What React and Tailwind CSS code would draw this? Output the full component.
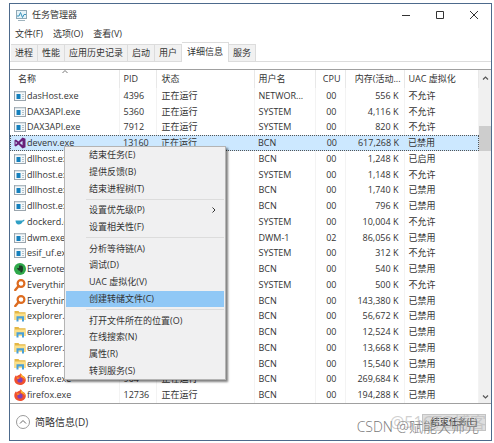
import { useState } from "react";

const processes = [
  { icon: "app", name: "dasHost.exe", pid: "4396", user: "NETWOR...", cpu: "00", mem: "556 K", uac: "不允许" },
  { icon: "app", name: "DAX3API.exe", pid: "5360", user: "SYSTEM", cpu: "00", mem: "4,116 K", uac: "不允许" },
  { icon: "app", name: "DAX3API.exe", pid: "7912", user: "SYSTEM", cpu: "00", mem: "820 K", uac: "不允许" },
  { icon: "vs", name: "devenv.exe", pid: "13160", user: "BCN", cpu: "00", mem: "617,268 K", uac: "已禁用" },
  { icon: "app", name: "dllhost.exe", pid: "", user: "BCN", cpu: "00", mem: "1,248 K", uac: "已启用" },
  { icon: "app", name: "dllhost.exe", pid: "", user: "SYSTEM", cpu: "00", mem: "1,148 K", uac: "不允许" },
  { icon: "app", name: "dllhost.exe", pid: "", user: "BCN", cpu: "00", mem: "1,740 K", uac: "已禁用" },
  { icon: "app", name: "dllhost.exe", pid: "", user: "BCN", cpu: "00", mem: "796 K", uac: "已禁用" },
  { icon: "docker", name: "dockerd.exe", pid: "", user: "SYSTEM", cpu: "00", mem: "10,004 K", uac: "不允许" },
  { icon: "app", name: "dwm.exe", pid: "", user: "DWM-1", cpu: "02", mem: "86,056 K", uac: "已禁用" },
  { icon: "app", name: "esif_uf.exe", pid: "", user: "SYSTEM", cpu: "00", mem: "312 K", uac: "不允许" },
  { icon: "evernote", name: "Evernote.exe", pid: "", user: "BCN", cpu: "00", mem: "540 K", uac: "已禁用" },
  { icon: "search", name: "Everything.exe", pid: "", user: "SYSTEM", cpu: "00", mem: "500 K", uac: "不允许" },
  { icon: "search", name: "Everything.exe", pid: "", user: "BCN", cpu: "00", mem: "143,380 K", uac: "已禁用" },
  { icon: "folder", name: "explorer.exe", pid: "", user: "BCN", cpu: "00", mem: "56,672 K", uac: "已禁用" },
  { icon: "folder", name: "explorer.exe", pid: "", user: "BCN", cpu: "00", mem: "12,524 K", uac: "已禁用" },
  { icon: "folder", name: "explorer.exe", pid: "", user: "BCN", cpu: "00", mem: "13,668 K", uac: "已禁用" },
  { icon: "folder", name: "explorer.exe", pid: "", user: "BCN", cpu: "00", mem: "15,540 K", uac: "已禁用" },
  { icon: "firefox", name: "firefox.exe", pid: "904", user: "BCN", cpu: "00", mem: "269,684 K", uac: "已禁用" },
  { icon: "firefox", name: "firefox.exe", pid: "12736", user: "BCN", cpu: "00", mem: "194,288 K", uac: "已禁用" },
];

const tabs = ["进程", "性能", "应用历史记录", "启动", "用户", "详细信息", "服务"];

const menuGroups = [
  ["结束任务(E)", "提供反馈(B)", "结束进程树(T)"],
  ["设置优先级(P)", "设置相关性(F)"],
  ["分析等待链(A)", "调试(D)", "UAC 虚拟化(V)", "创建转储文件(C)"],
  ["打开文件所在的位置(O)", "在线搜索(N)", "属性(R)", "转到服务(S)"],
];

function ProcessIcon({ type }) {
  return (
    <svg viewBox="0 0 12 12" className="size-3 shrink-0" aria-hidden="true">
      {type === "app" && (
        <>
          <rect x="0.5" y="1.5" width="11" height="9" fill="#f4f8fa" stroke="#9aa5ad" />
          <path d="M1 2h10" stroke="#c3cdd3" />
          <rect x="2.5" y="4" width="4" height="5" fill="#1580bd" />
          <path d="M8 4.5h2M8 6.5h2M8 8.5h2" stroke="#b8c4cb" />
        </>
      )}
      {type === "vs" && (
        <path
          fill="#68217a"
          fillRule="evenodd"
          d="M8.5 0.5 11.5 1.7v8.6l-3 1.2-4-4.1-2.7 2.1L0.5 8.8V3.2l1.3-.7 2.7 2.1zM8.5 3.7 5.8 6l2.7 2.3zM1.6 4.4v3.2L3.2 6z"
        />
      )}
      {type === "docker" && (
        <path fill="#2f9fc4" d="M1.5 4.5h6.7c.9 0 1-.8 2.3-.6-.2 1-.9 1.5-1.7 1.6C8 7.6 6.5 8.5 4.7 8.5 2.8 8.5 1.6 7 1.5 4.5z" />
      )}
      {type === "evernote" && (
        <>
          <circle cx="6" cy="6" r="6" fill="#2fa84a" />
          <path fill="#1d3b26" d="M5 2.5h2c1.5 0 2 1 2 3s-.5 4-1.8 4S6 8 7 7.8C5.5 8 3.5 7.5 3 5h2z" />
        </>
      )}
      {type === "search" && (
        <>
          <circle cx="7" cy="4.5" r="3.4" fill="#fff" stroke="#dd6b1f" strokeWidth="2.2" />
          <path d="M4.6 7 1.3 11" stroke="#dd6b1f" strokeWidth="2.4" strokeLinecap="round" />
        </>
      )}
      {type === "folder" && (
        <>
          <path fill="#e5b745" d="M0.5 1h4l1 1.3h6V10h-11z" />
          <path fill="#fbe08a" d="M0.5 3.5h11V10h-11z" />
          <path fill="#4aa0d8" d="M2.5 6.2h7.5v5.3H8v-3H4.5v3h-2z" />
        </>
      )}
      {type === "firefox" && (
        <>
          <path fill="#f0502e" d="M6.5.3c1 .8 1.5 1.5 1.7 2.2C10.5 3.2 12 5 11.8 7.2 11.5 10 9 12 6 12S.3 9.8.3 6.8c0-1.8.5-3.2 1.7-4.5l.7 1.2C4 2 6 2.3 6.5.3z" />
          <path fill="#ffb52e" d="M6.5.3c1 .8 1.5 1.5 1.7 2.2 2 .8 3 2.3 2.6 4.2C10 4.8 8.5 4.5 7 4z" />
          <circle cx="6" cy="7" r="2.6" fill="#8040b8" />
          <path fill="#ff8a2a" d="M2.5 4.5c1.5-.5 3 0 4 .8-1.5 0-2 .7-3 1z" />
        </>
      )}
    </svg>
  );
}

function TitleBar() {
  return (
    <header className="flex h-[22px] items-center">
      <svg viewBox="0 0 13 13" className="ml-[5px] mr-1 size-[13px]" fill="none" aria-hidden="true">
        <rect x="1.5" y="1.5" width="10" height="8" fill="#e6f3f8" stroke="#8fa9b6" />
        <path d="M2 7h2l1.5-3.5 2 5 1.5-3h2" stroke="#3a94bd" />
        <path d="M3 11.5h7" stroke="#9fb3bd" />
      </svg>
      <h1 className="flex-1 text-[9px]">任务管理器</h1>
      <button className="flex h-full w-[34px] items-center justify-center" aria-label="最小化">
        <svg viewBox="0 0 8 8" className="size-2" stroke="#333"><path d="M0 4.5h8" /></svg>
      </button>
      <button className="flex h-full w-[34px] items-center justify-center" aria-label="最大化">
        <svg viewBox="0 0 8 8" className="size-2" stroke="#333" fill="none"><path d="M.5.5h7v7h-7z" /></svg>
      </button>
      <button className="flex h-full w-[34px] items-center justify-center" aria-label="关闭">
        <svg viewBox="0 0 8 8" className="size-2" stroke="#333"><path d="M0 0l8 8M8 0 0 8" /></svg>
      </button>
    </header>
  );
}

function ContextMenu() {
  return (
    <div role="menu" className="absolute left-[54px] top-[76px] flex h-[234px] w-[162px] flex-col border border-[#b4b4b4] bg-[#f0f0f1] px-px shadow-[2px_2px_2px_rgba(0,0,0,0.5)]">
      {menuGroups.map((group, i) => (
        <div key={i} className="contents">
          {i > 0 && <div className="ml-5 flex h-[5px] items-center"><div className="h-px w-full bg-[#dcdcdc]" /></div>}
          {group.map((item) => (
            <button
              key={item}
              role="menuitem"
              className={
                item === "创建转储文件(C)"
                  ? "flex min-h-0 flex-1 items-center bg-[#90c8f6] pl-[23px] pr-2"
                  : "flex min-h-0 flex-1 items-center pl-[23px] pr-2 hover:bg-[#90c8f6]"
              }
            >
              <span className="flex-1 text-left leading-3">{item}</span>
              {item === "设置优先级(P)" && (
                <svg viewBox="0 0 4 6" className="h-[6px] w-1" fill="none" stroke="#333"><path d="M.5.5 3 3 .5 5.5" /></svg>
              )}
            </button>
          ))}
        </div>
      ))}
    </div>
  );
}

function ScrollBar() {
  return (
    <div className="flex w-3 flex-col items-center bg-[#f0f0f0]">
      <button className="flex h-4 items-center" aria-label="向上滚动">
        <svg viewBox="0 0 7 4" className="h-1 w-[7px]" fill="none" stroke="#555" strokeWidth="1.2"><path d="M1 3.5 3.5 1 6 3.5" /></svg>
      </button>
      <div className="mt-10 h-[25px] w-full bg-[#cdcdcd]" />
      <div className="flex-1" />
      <button className="flex h-3 items-center" aria-label="向下滚动">
        <svg viewBox="0 0 7 4" className="h-1 w-[7px]" fill="none" stroke="#555" strokeWidth="1.2"><path d="M1 .5 3.5 3 6 .5" /></svg>
      </button>
    </div>
  );
}

export default function App() {
  const [tab, setTab] = useState("详细信息");
  const [selected, setSelected] = useState(3);

  return (
    <div className="h-screen bg-white pb-[2px] pl-[9px] pr-[2px] pt-[3px] font-['Open_Sans','Noto_Sans_CJK_SC',sans-serif] text-[9px] text-[#333]">
      <div className="flex h-full flex-col border border-[#4d6a8c] bg-white">
        <TitleBar />
        <nav className="flex h-4 items-center gap-[10px] pl-[5px]">
          <button>文件(F)</button>
          <button>选项(O)</button>
          <button>查看(V)</button>
        </nav>

        {/* tabs */}
        <div role="tablist" className="flex h-5 items-end border-b border-[#dcdcdc] pl-px">
          {tabs.map((t) => (
            <button
              key={t}
              role="tab"
              aria-selected={t === tab}
              onClick={() => setTab(t)}
              className={
                t === tab
                  ? "-mb-px h-5 border-r border-t border-[#dcdcdc] bg-white px-[5px] pb-px"
                  : "h-[17px] border-r border-t border-[#dcdcdc] bg-[#f1f1f1] px-1"
              }
            >
              {t}
            </button>
          ))}
        </div>

        {/* process list */}
        <main className="relative mt-[7px] flex min-h-0 flex-1 border-y border-[#a0a0a0]">
          <table className="h-full min-w-0 flex-1 table-fixed border-collapse text-left leading-3">
            <colgroup>
              <col className="w-[109px]" />
              <col className="w-[37px]" />
              <col className="w-[98px]" />
              <col className="w-[61px]" />
              <col className="w-[30px]" />
              <col className="w-[59px]" />
              <col />
            </colgroup>
            <thead>
              <tr className="h-[18px] whitespace-nowrap *:border-r *:border-[#e8e8e8] *:py-0 *:font-normal">
                <th className="relative pl-2">
                  名称
                  <svg viewBox="0 0 6 3" className="absolute left-[52px] top-0 h-[3px] w-[6px]" fill="none" stroke="#777"><path d="M.5 3 3 .5 5.5 3" /></svg>
                </th>
                <th className="pl-1">PID</th>
                <th className="pl-[5px]">状态</th>
                <th className="pl-1">用户名</th>
                <th className="pr-1 text-right">CPU</th>
                <th className="pr-[3px] text-right">内存(活动...</th>
                <th className="border-r-0 pl-1">UAC 虚拟化</th>
              </tr>
            </thead>
            <tbody>
              {processes.map((p, i) => (
                <tr
                  key={i}
                  onClick={() => setSelected(i)}
                  className={
                    i === selected
                      ? "whitespace-nowrap bg-[#cce8ff] outline-1 -outline-offset-1 outline-dotted outline-[#555] *:py-0"
                      : "whitespace-nowrap *:border-r *:border-[#f3f3f3] *:py-0"
                  }
                >
                  <td className="pl-1">
                    <div className="flex items-center gap-px">
                      <ProcessIcon type={p.icon} />
                      {p.name}
                    </div>
                  </td>
                  <td className="pl-1">{p.pid}</td>
                  <td className="pl-[5px]">正在运行</td>
                  <td className="pl-1">{p.user}</td>
                  <td className="pr-2 text-right">{p.cpu}</td>
                  <td className="pr-[5px] text-right">{p.mem}</td>
                  <td className="pl-1">{p.uac}</td>
                </tr>
              ))}
            </tbody>
          </table>
          <ScrollBar />
          <ContextMenu />
        </main>

        <footer className="relative flex h-9 items-center justify-between pl-[6px] pr-[5px]">
          <button className="flex items-center gap-[5px] text-[10px]">
            <svg viewBox="0 0 14 14" className="size-[14px]" fill="none" stroke="#9a9a9a">
              <circle cx="7" cy="7" r="6.5" />
              <path d="M4 8.5l3-3 3 3" stroke="#666" />
            </svg>
            简略信息(D)
          </button>
          <button className="h-[17px] w-16 border border-[#c4c4c4] bg-[#dedede] leading-3">结束任务(E)</button>
          <span className="pointer-events-none absolute right-[5px] top-2 whitespace-nowrap text-[16px] leading-5 text-[#bbbbbb]/70">@51CTO博客</span>
          <span className="pointer-events-none absolute right-3 top-[13px] whitespace-nowrap text-[14px] font-light leading-5 text-[#777777]">CSDN @赋能大师兄</span>
        </footer>
      </div>
    </div>
  );
}
